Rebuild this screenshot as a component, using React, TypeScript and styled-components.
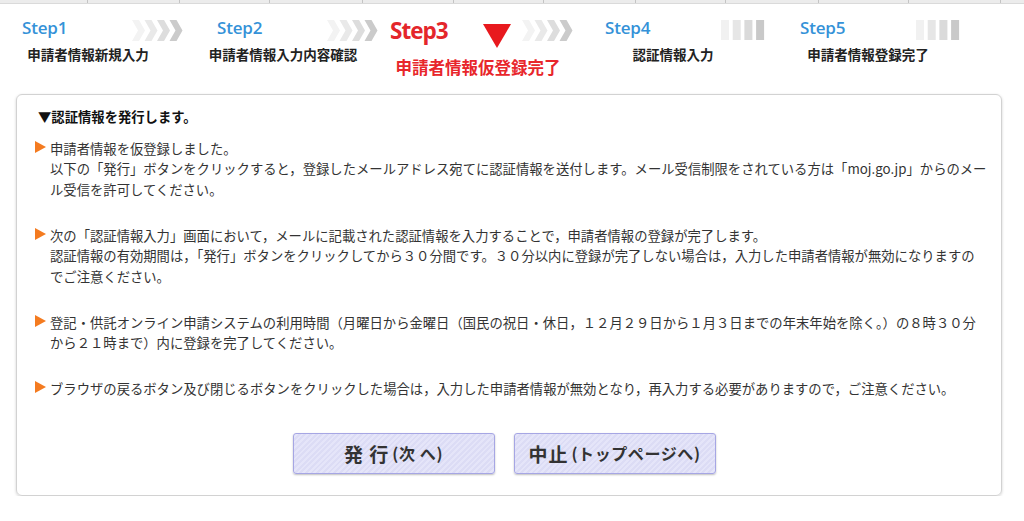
import React from 'react';
import styled, { createGlobalStyle } from 'styled-components';

const Global = createGlobalStyle`
  html, body { margin: 0; padding: 0; background: #fff; }
  body {
    font-family: "Noto Sans CJK JP", "Noto Sans", sans-serif;
    color: #333;
  }
`;

const TopStrip = styled.div`
  display: flex;
  height: 3px;
  background: #ececec;
  border-bottom: 1px solid #dadada;
  overflow: hidden;
`;

const StripCell = styled.div<{ $w: number }>`
  flex: 0 0 ${(p) => p.$w}px;
  box-sizing: border-box;
  border-right: 1px solid #c4c4c4;
`;

const StepsBar = styled.div`
  display: grid;
  grid-template-columns: repeat(5, 195px);
  padding-top: 11px;
`;

const StepCol = styled.div`
  display: flex;
  flex-direction: column;
`;

const StepHead = styled.div<{ $pad: number }>`
  display: flex;
  align-items: flex-start;
  height: 30px;
  padding-left: ${(p) => p.$pad}px;
`;

const StepLabel = styled.div<{ $current?: boolean }>`
  font-family: "Open Sans", "Liberation Sans", sans-serif;
  font-weight: ${(p) => (p.$current ? 700 : 600)};
  font-size: ${(p) => (p.$current ? 22.5 : 17)}px;
  line-height: ${(p) => (p.$current ? 31 : 26)}px;
  color: ${(p) => (p.$current ? '#e4262b' : '#3592d8')};
  letter-spacing: ${(p) => (p.$current ? '-1px' : '-0.2px')};
`;

const Marker = styled.svg<{ $ml: number }>`
  display: block;
  margin-left: ${(p) => p.$ml}px;
  margin-top: 9px;
`;

const Progress = styled.svg<{ $mr?: number }>`
  display: block;
  margin-left: auto;
  margin-right: ${(p) => p.$mr ?? 12}px;
  margin-top: 5px;
`;

const StepCaption = styled.div<{ $current?: boolean }>`
  width: 176px;
  text-align: center;
  font-weight: 700;
  font-size: ${(p) => (p.$current ? 16.5 : 13.5)}px;
  line-height: ${(p) => (p.$current ? 20 : 18)}px;
  margin-top: ${(p) => (p.$current ? 12 : 0)}px;
  color: ${(p) => (p.$current ? '#e8262b' : '#222')};
  white-space: nowrap;
`;

const Panel = styled.section`
  margin: 17px 0 0 16px;
  width: 986px;
  box-sizing: border-box;
  border: 1px solid #d2d2d2;
  border-radius: 6px;
  box-shadow: 0 1px 3px rgba(0, 0, 0, 0.18);
  padding: 12px 18px 21px 18px;
`;

const PanelTitle = styled.h2`
  margin: 0 0 0 3px;
  font-size: 13.33px;
  line-height: 20.5px;
  font-weight: 700;
  color: #111;
`;

const NoticeList = styled.ul`
  list-style: none;
  margin: 11px 0 0 0;
  padding: 0;
`;

const NoticeItem = styled.li`
  display: flex;
  align-items: flex-start;
  gap: 4px;
  margin-bottom: 25.5px;
  &:last-child { margin-bottom: 0; }
`;

const Bullet = styled.span`
  flex: 0 0 auto;
  width: 0;
  height: 0;
  margin-top: 2px;
  border-top: 6px solid transparent;
  border-bottom: 6px solid transparent;
  border-left: 11px solid #f47b20;
`;

const NoticeText = styled.p`
  margin: 0;
  font-size: 13.33px;
  line-height: 20.5px;
  color: #333;
  white-space: nowrap;
`;

const ButtonRow = styled.div`
  display: flex;
  justify-content: center;
  gap: 19px;
  margin-top: 33px;
  padding-right: 10px;
`;

const ActionButton = styled.button`
  width: 202px;
  height: 41px;
  box-sizing: border-box;
  border: 1px solid #a6a6e4;
  border-radius: 3px;
  background: repeating-linear-gradient(
    -45deg,
    #dcdcf5 0px,
    #dcdcf5 2px,
    #e5e5f9 2px,
    #e5e5f9 4px
  );
  box-shadow: 0 1px 2px rgba(0, 0, 0, 0.25);
  font-family: "Noto Sans CJK JP", "Noto Sans", sans-serif;
  font-weight: 700;
  color: #333;
  cursor: pointer;
  display: flex;
  align-items: center;
  justify-content: center;
  padding: 0;
`;

const BigText = styled.span`
  font-size: 19px;
  letter-spacing: 1px;
`;

const SmallText = styled.span`
  font-size: 16px;
  letter-spacing: 0.6px;
  margin-left: 3px;
`;

const Chevrons = () => (
  <Progress width="51" height="21" viewBox="0 0 51 21">
    {['#f3f3f3', '#e9e9e9', '#dddddd', '#cbcbcb'].map((c, i) => {
      const x = i * 12.5;
      return (
        <polygon
          key={i}
          fill={c}
          points={`${x},0 ${x + 7},0 ${x + 13},10.5 ${x + 7},21 ${x},21 ${x + 6},10.5`}
        />
      );
    })}
  </Progress>
);

const Bars = () => (
  <Progress $mr={14} width="45" height="21" viewBox="0 0 45 21">
    {['#f1f1f1', '#e6e6e6', '#dadada', '#c9c9c9'].map((c, i) => (
      <rect key={i} x={i * 11.7} y={0} width={8} height={20} fill={c} />
    ))}
  </Progress>
);

const stripWidths = [88, 92, 90, 93, 91, 90, 92, 90, 93, 90, 92, 60];

export default function App() {
  return (
    <>
      <Global />
      <TopStrip>
        {stripWidths.map((w, i) => (
          <StripCell key={i} $w={w} />
        ))}
      </TopStrip>

      <StepsBar>
        <StepCol>
          <StepHead $pad={22}>
            <StepLabel>Step1</StepLabel>
            <Chevrons />
          </StepHead>
          <StepCaption>申請者情報新規入力</StepCaption>
        </StepCol>
        <StepCol>
          <StepHead $pad={22}>
            <StepLabel>Step2</StepLabel>
            <Chevrons />
          </StepHead>
          <StepCaption>申請者情報入力内容確認</StepCaption>
        </StepCol>
        <StepCol>
          <StepHead $pad={0}>
            <StepLabel $current>Step3</StepLabel>
            <Marker $ml={35} width="28" height="24" viewBox="0 0 28 24">
              <polygon points="0,0 28,0 14,24" fill="#e8191e" />
            </Marker>
            <Chevrons />
          </StepHead>
          <StepCaption $current>申請者情報仮登録完了</StepCaption>
        </StepCol>
        <StepCol>
          <StepHead $pad={20}>
            <StepLabel>Step4</StepLabel>
            <Bars />
          </StepHead>
          <StepCaption>認証情報入力</StepCaption>
        </StepCol>
        <StepCol>
          <StepHead $pad={20}>
            <StepLabel>Step5</StepLabel>
            <Bars />
          </StepHead>
          <StepCaption>申請者情報登録完了</StepCaption>
        </StepCol>
      </StepsBar>

      <Panel>
        <PanelTitle>▼認証情報を発行します。</PanelTitle>
        <NoticeList>
          <NoticeItem>
            <Bullet />
            <NoticeText>
              申請者情報を仮登録しました。
              <br />
              以下の「発行」ボタンをクリックすると，登録したメールアドレス宛てに認証情報を送付します。メール受信制限をされている方は「moj.go.jp」からのメー
              <br />
              ル受信を許可してください。
            </NoticeText>
          </NoticeItem>
          <NoticeItem>
            <Bullet />
            <NoticeText>
              次の「認証情報入力」画面において，メールに記載された認証情報を入力することで，申請者情報の登録が完了します。
              <br />
              認証情報の有効期間は，「発行」ボタンをクリックしてから３０分間です。３０分以内に登録が完了しない場合は，入力した申請者情報が無効になりますの
              <br />
              でご注意ください。
            </NoticeText>
          </NoticeItem>
          <NoticeItem>
            <Bullet />
            <NoticeText>
              登記・供託オンライン申請システムの利用時間（月曜日から金曜日（国民の祝日・休日，１２月２９日から１月３日までの年末年始を除く。）の８時３０分
              <br />
              から２１時まで）内に登録を完了してください。
            </NoticeText>
          </NoticeItem>
          <NoticeItem>
            <Bullet />
            <NoticeText>
              ブラウザの戻るボタン及び閉じるボタンをクリックした場合は，入力した申請者情報が無効となり，再入力する必要がありますので，ご注意ください。
            </NoticeText>
          </NoticeItem>
        </NoticeList>
        <ButtonRow>
          <ActionButton type="button">
            <BigText>発 行</BigText>
            <SmallText>(次 へ)</SmallText>
          </ActionButton>
          <ActionButton type="button">
            <BigText>中止</BigText>
            <SmallText>(トップページへ)</SmallText>
          </ActionButton>
        </ButtonRow>
      </Panel>
    </>
  );
}
